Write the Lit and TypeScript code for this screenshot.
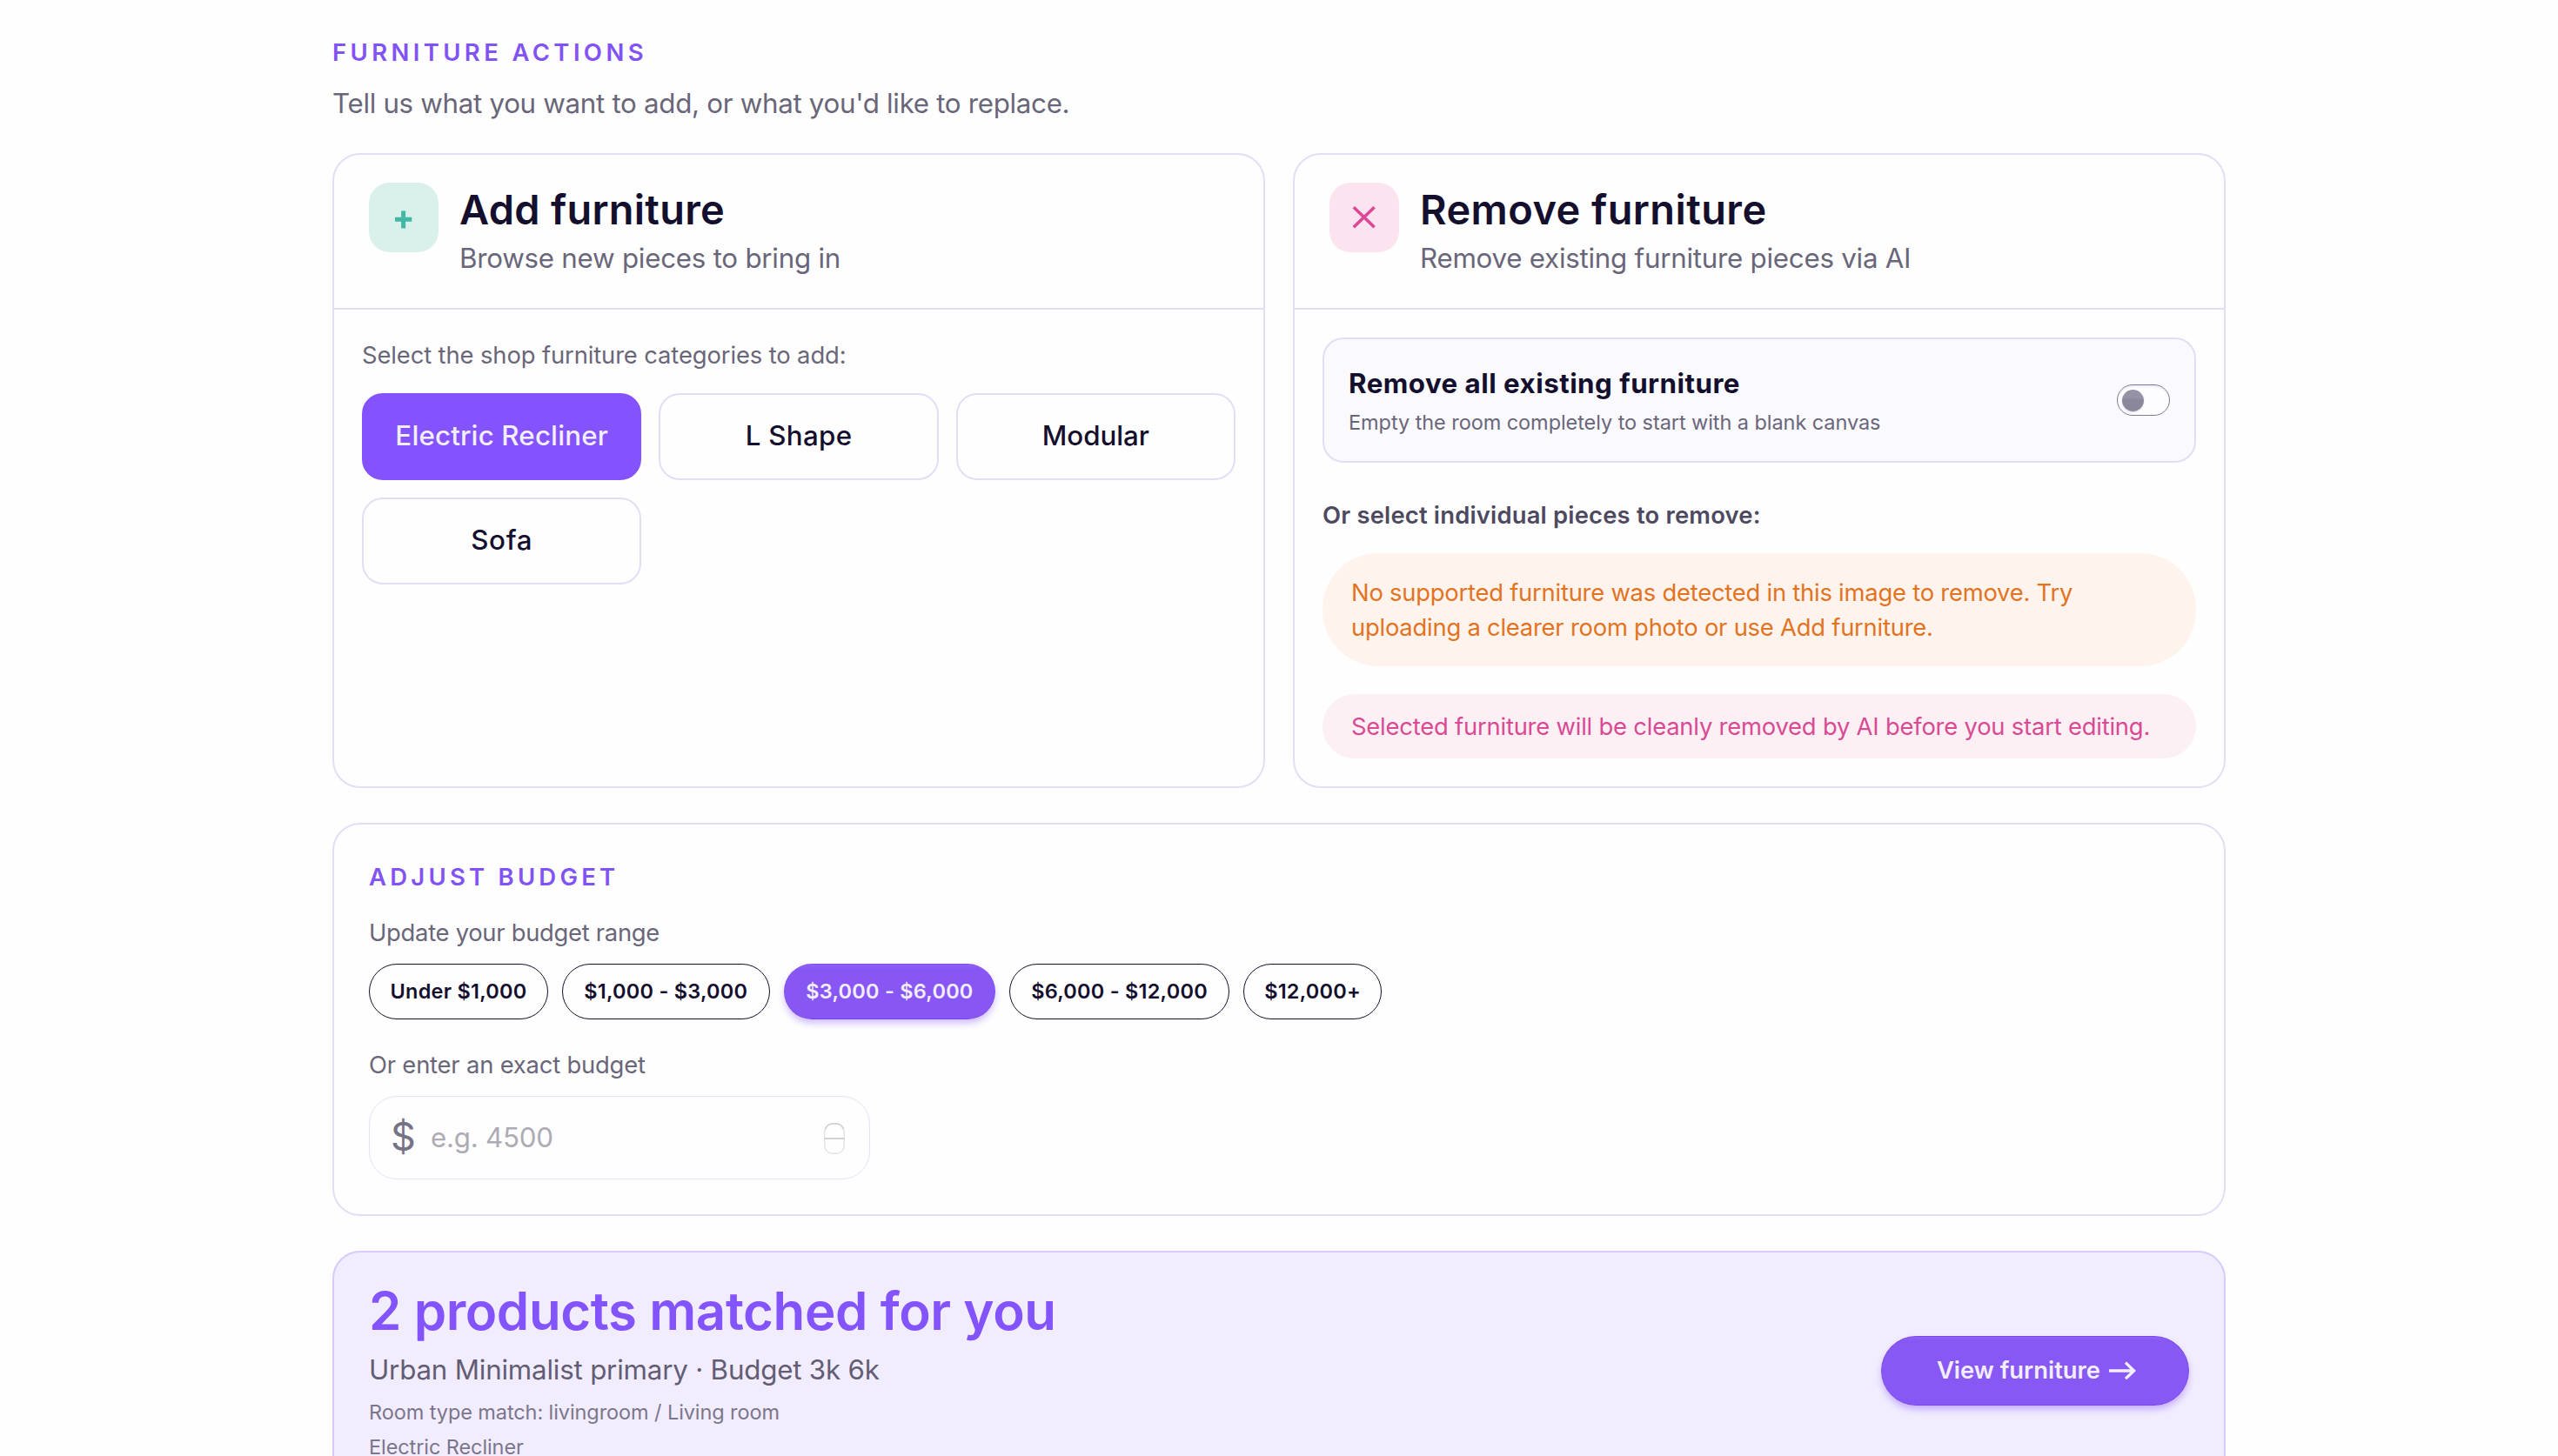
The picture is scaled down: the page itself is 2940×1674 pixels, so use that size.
import { LitElement, html, css } from "lit";
import { customElement, state } from "lit/decorators.js";
import { classMap } from "lit/directives/class-map.js";

const CATEGORIES = [
  { label: "Electric Recliner", tone: "t-recliner" },
  { label: "L Shape", tone: "t-lshape" },
  { label: "Modular", tone: "t-modular" },
  { label: "Sofa", tone: "t-sofa" },
];

const RANGES = [
  { label: "Under $1,000", size: "r-a" },
  { label: "$1,000 - $3,000", size: "r-b" },
  { label: "$3,000 - $6,000", size: "r-c" },
  { label: "$6,000 - $12,000", size: "r-d" },
  { label: "$12,000+", size: "r-e" },
];

@customElement("app-root")
export class AppRoot extends LitElement {
  @state() private category = "Electric Recliner";
  @state() private range = "$3,000 - $6,000";

  static styles = css`
    :host {
      display: block;
      box-sizing: border-box;
      height: 1674px;
      overflow: hidden;
      background: #fefefe;
      font-family: Inter, "Liberation Sans", sans-serif;
      color: #150f2e;
    }
    * {
      box-sizing: border-box;
      margin: 0;
    }
    button {
      font: inherit;
      color: inherit;
      padding: 0;
      background: none;
      cursor: pointer;
      white-space: nowrap;
    }
    .page {
      width: 2176px;
      margin: 0 auto;
      padding-top: 40px;
      display: flex;
      flex-direction: column;
    }
    .eyebrow {
      font-size: 27.5px;
      line-height: 40px;
      font-weight: 600;
      letter-spacing: 4.37px;
      color: #8253f4;
    }
    .eyebrow.budget {
      letter-spacing: 4.22px;
    }
    .lead {
      margin: 13px 0 31px;
      font-size: 31.3px;
      line-height: 52px;
      letter-spacing: -0.31px;
      color: #6a667a;
    }
    .cards {
      display: grid;
      grid-template-columns: 1fr 1fr;
      gap: 32px;
      height: 730px;
    }
    .card {
      border: 2px solid #e2def6;
      border-radius: 32px;
    }
    .card-head {
      height: 178px;
      padding: 32px 40px 0;
      border-bottom: 2px solid #e2def6;
      display: flex;
      gap: 24px;
    }
    .badge {
      width: 80px;
      height: 80px;
      border-radius: 24px;
      flex: none;
      display: block;
    }
    .badge.add {
      background: #d9f0eb;
      color: #43b7a5;
    }
    .badge.remove {
      background: #fbe3ef;
      color: #dd4798;
    }
    .title {
      font-size: 46.9px;
      line-height: 62px;
      font-weight: 600;
      letter-spacing: 0.287px;
    }
    .title.remove {
      letter-spacing: 0.45px;
    }
    .sub {
      font-size: 31.3px;
      line-height: 50px;
      letter-spacing: -0.25px;
      color: #6a667a;
    }
    .card-body {
      padding: 32px;
    }
    .label {
      font-size: 27.4px;
      line-height: 40px;
      letter-spacing: -0.12px;
      color: #6a667a;
    }
    .label.range {
      margin-top: 24px;
      letter-spacing: -0.29px;
    }
    .label.exact {
      margin-top: 32px;
      letter-spacing: -0.2px;
    }
    .categories {
      margin-top: 24px;
      display: grid;
      grid-template-columns: repeat(3, 1fr);
      grid-auto-rows: 100px;
      gap: 20px;
    }
    .category {
      border: 2px solid #e2def6;
      border-radius: 24px;
      font-size: 31.3px;
      font-weight: 500;
      line-height: 50px;
      padding-bottom: 2px;
    }
    .category.on {
      background: #8453fd;
      border-color: #8453fd;
      color: #f3eefe;
    }
    .t-recliner { letter-spacing: 0.15px; }
    .t-lshape { letter-spacing: 0.3px; }
    .t-modular { letter-spacing: -0.05px; }
    .t-sofa { letter-spacing: 0.7px; }
    .remove-all {
      height: 144px;
      border: 2px solid #e2def6;
      border-radius: 24px;
      background: #faf9fe;
      padding: 27px 28px 0;
      display: flex;
      justify-content: space-between;
    }
    .remove-all-title {
      font-size: 31.3px;
      line-height: 48px;
      font-weight: 700;
      letter-spacing: 0.48px;
    }
    .remove-all-sub {
      margin-top: 1px;
      font-size: 23.5px;
      line-height: 40px;
      letter-spacing: -0.07px;
      color: #6a667a;
    }
    .toggle {
      margin-top: 25px;
      width: 61px;
      height: 36px;
      border: 1px solid #7f7b8d;
      border-radius: 18px;
      padding: 5px;
      background: #fdfdff;
      box-shadow: inset 0 2px 2px #efedf9;
      flex: none;
    }
    .knob {
      display: block;
      width: 25px;
      height: 25px;
      border-radius: 50%;
      background: linear-gradient(#9692a5 0 35%, #8b879a 50% 100%);
      box-shadow: 0 1px 2px #d9d6e3;
    }
    .pieces {
      margin-top: 40px;
      font-size: 27.4px;
      line-height: 40px;
      font-weight: 600;
      letter-spacing: 0.19px;
      color: #4d4960;
    }
    .note {
      font-size: 27.4px;
      line-height: 40px;
      padding: 0 33px;
      white-space: nowrap;
    }
    .note.warn {
      margin-top: 24px;
      height: 130px;
      padding-top: 25px;
      border-radius: 64px;
      background: #fff4ed;
      color: #e2731f;
      letter-spacing: -0.235px;
    }
    .note.info {
      margin-top: 32px;
      height: 74px;
      padding-top: 17px;
      border-radius: 37px;
      background: #fdf0f5;
      color: #d94a94;
      letter-spacing: -0.21px;
    }
    .budget-card {
      margin-top: 40px;
      height: 452px;
      padding: 40px;
      border: 2px solid #e2def6;
      border-radius: 32px;
    }
    .ranges {
      margin-top: 16px;
      display: flex;
      gap: 15.6px;
    }
    .range-pill {
      height: 64px;
      border: 1.5px solid #150f2e;
      border-radius: 32px;
      font-size: 23.5px;
      font-weight: 600;
      line-height: 34px;
      padding-bottom: 1px;
      letter-spacing: 0.24px;
    }
    .r-a { width: 206px; }
    .r-b { width: 239.5px; }
    .r-c { width: 243.5px; }
    .r-d { width: 253.5px; }
    .r-e { width: 159.5px; }
    .range-pill.on {
      color: #f3eefe;
      background: linear-gradient(#8f61f8, #8857f3 8%, #8857f3);
      border-color: #8350ee #7f4deb #7745e2;
      box-shadow: 0 5px 8px -1px rgba(132, 83, 253, 0.42);
    }
    .amount {
      margin-top: 16px;
      width: 576px;
      height: 96px;
      border: 1.5px solid #e6e3f8;
      border-radius: 32px;
      padding: 0 28px 0 25px;
      display: flex;
      align-items: center;
      box-shadow: inset 0 2px 2px #fafafd;
    }
    .dollar {
      width: 45px;
      font-size: 45px;
      font-weight: 400;
      line-height: 60px;
      color: #777386;
      padding-bottom: 3px;
      text-indent: -1px;
    }
    .placeholder {
      flex: 1;
      font-size: 31.3px;
      line-height: 50px;
      letter-spacing: -0.25px;
      color: #adabb4;
    }
    .spinner {
      width: 24px;
      height: 36px;
      flex: none;
      display: block;
      margin-top: 2px;
    }
    .matched {
      margin-top: 40px;
      height: 320px;
      flex: none;
      padding: 32px 40px;
      background: #f2edfe;
      border: 2px solid #d8cafa;
      border-radius: 32px;
      display: flex;
      justify-content: space-between;
    }
    .matched-title {
      font-size: 60px;
      line-height: 70px;
      font-weight: 600;
      letter-spacing: -0.42px;
      color: #8353fb;
    }
    .matched-sub {
      margin-top: 8px;
      font-size: 31.3px;
      line-height: 50px;
      letter-spacing: -0.2px;
      color: #625d74;
    }
    .matched-meta {
      font-size: 23.5px;
      line-height: 40px;
      letter-spacing: -0.09px;
      color: #7b768c;
    }
    .matched-meta.first {
      margin-top: 4px;
    }
    .view {
      margin-top: 64px;
      width: 354px;
      height: 80px;
      border: 1.5px solid #7a49e4;
      border-radius: 40px;
      background: linear-gradient(#9062f9, #8858f4 6%, #8858f4);
      box-shadow: 0 5px 8px -1px rgba(132, 83, 253, 0.45);
      color: #f3eefe;
      font-size: 27.4px;
      font-weight: 600;
      line-height: 40px;
      display: flex;
      align-items: center;
      justify-content: center;
      gap: 9px;
      padding: 0 0 2px 3px;
    }
    .arrow {
      width: 32px;
      height: 22px;
      display: block;
    }
  `;

  private categories() {
    return CATEGORIES.map(
      (c) => html`<button
        class=${classMap({ category: true, [c.tone]: true, on: c.label === this.category })}
        @click=${() => (this.category = c.label)}
      >${c.label}</button>`
    );
  }

  private ranges() {
    return RANGES.map(
      (r) => html`<button
        class=${classMap({ "range-pill": true, [r.size]: true, on: r.label === this.range })}
        @click=${() => (this.range = r.label)}
      >${r.label}</button>`
    );
  }

  render() {
    return html`
      <main class="page">
        <div class="eyebrow">FURNITURE ACTIONS</div>
        <p class="lead">Tell us what you want to add, or what you'd like to replace.</p>

        <div class="cards">
          <section class="card">
            <header class="card-head">
              <svg class="badge add" viewBox="0 0 80 80" fill="none" stroke="currentColor" stroke-width="5">
                <path d="M30 42.3h19.3M39.6 32.5v20" />
              </svg>
              <div>
                <h2 class="title">Add furniture</h2>
                <p class="sub">Browse new pieces to bring in</p>
              </div>
            </header>
            <div class="card-body">
              <p class="label">Select the shop furniture categories to add:</p>
              <div class="categories">${this.categories()}</div>
            </div>
          </section>

          <section class="card">
            <header class="card-head">
              <svg class="badge remove" viewBox="0 0 80 80" fill="none" stroke="currentColor" stroke-width="3.6">
                <path d="M27.8 28.2L51.6 51.2M51.6 28.2L27.8 51.2" />
              </svg>
              <div>
                <h2 class="title remove">Remove furniture</h2>
                <p class="sub">Remove existing furniture pieces via AI</p>
              </div>
            </header>
            <div class="card-body">
              <div class="remove-all">
                <div>
                  <h3 class="remove-all-title">Remove all existing furniture</h3>
                  <p class="remove-all-sub">Empty the room completely to start with a blank canvas</p>
                </div>
                <span class="toggle"><span class="knob"></span></span>
              </div>
              <p class="pieces">Or select individual pieces to remove:</p>
              <p class="note warn">No supported furniture was detected in this image to remove. Try<br />uploading a clearer room photo or use Add furniture.</p>
              <p class="note info">Selected furniture will be cleanly removed by AI before you start editing.</p>
            </div>
          </section>
        </div>

        <section class="budget-card">
          <div class="eyebrow budget">ADJUST BUDGET</div>
          <p class="label range">Update your budget range</p>
          <div class="ranges">${this.ranges()}</div>
          <p class="label exact">Or enter an exact budget</p>
          <div class="amount">
            <span class="dollar">$</span>
            <span class="placeholder">e.g. 4500</span>
            <svg class="spinner" viewBox="0 0 24 36" fill="none">
              <rect x="0.75" y="0.75" width="22.5" height="34.5" rx="9" stroke="#e2e2e3" stroke-width="1.3" />
              <path d="M1.5 7.5Q4 1 10 1H14Q20 1 22.5 7.5" stroke="#d0d0d1" stroke-width="1.5" />
              <path d="M0.5 18H23.5" stroke="#d2d2d3" stroke-width="2" />
            </svg>
          </div>
        </section>

        <section class="matched">
          <div>
            <h2 class="matched-title">2 products matched for you</h2>
            <p class="matched-sub">Urban Minimalist primary · Budget 3k 6k</p>
            <p class="matched-meta first">Room type match: livingroom / Living room</p>
            <p class="matched-meta">Electric Recliner</p>
          </div>
          <button class="view">
            <span>View furniture</span>
            <svg class="arrow" viewBox="0 0 32 22" fill="none" stroke="currentColor" stroke-width="3.4">
              <path d="M1 12H29.5M20 2.6L29.6 12L20 21.2" />
            </svg>
          </button>
        </section>
      </main>
    `;
  }
}
